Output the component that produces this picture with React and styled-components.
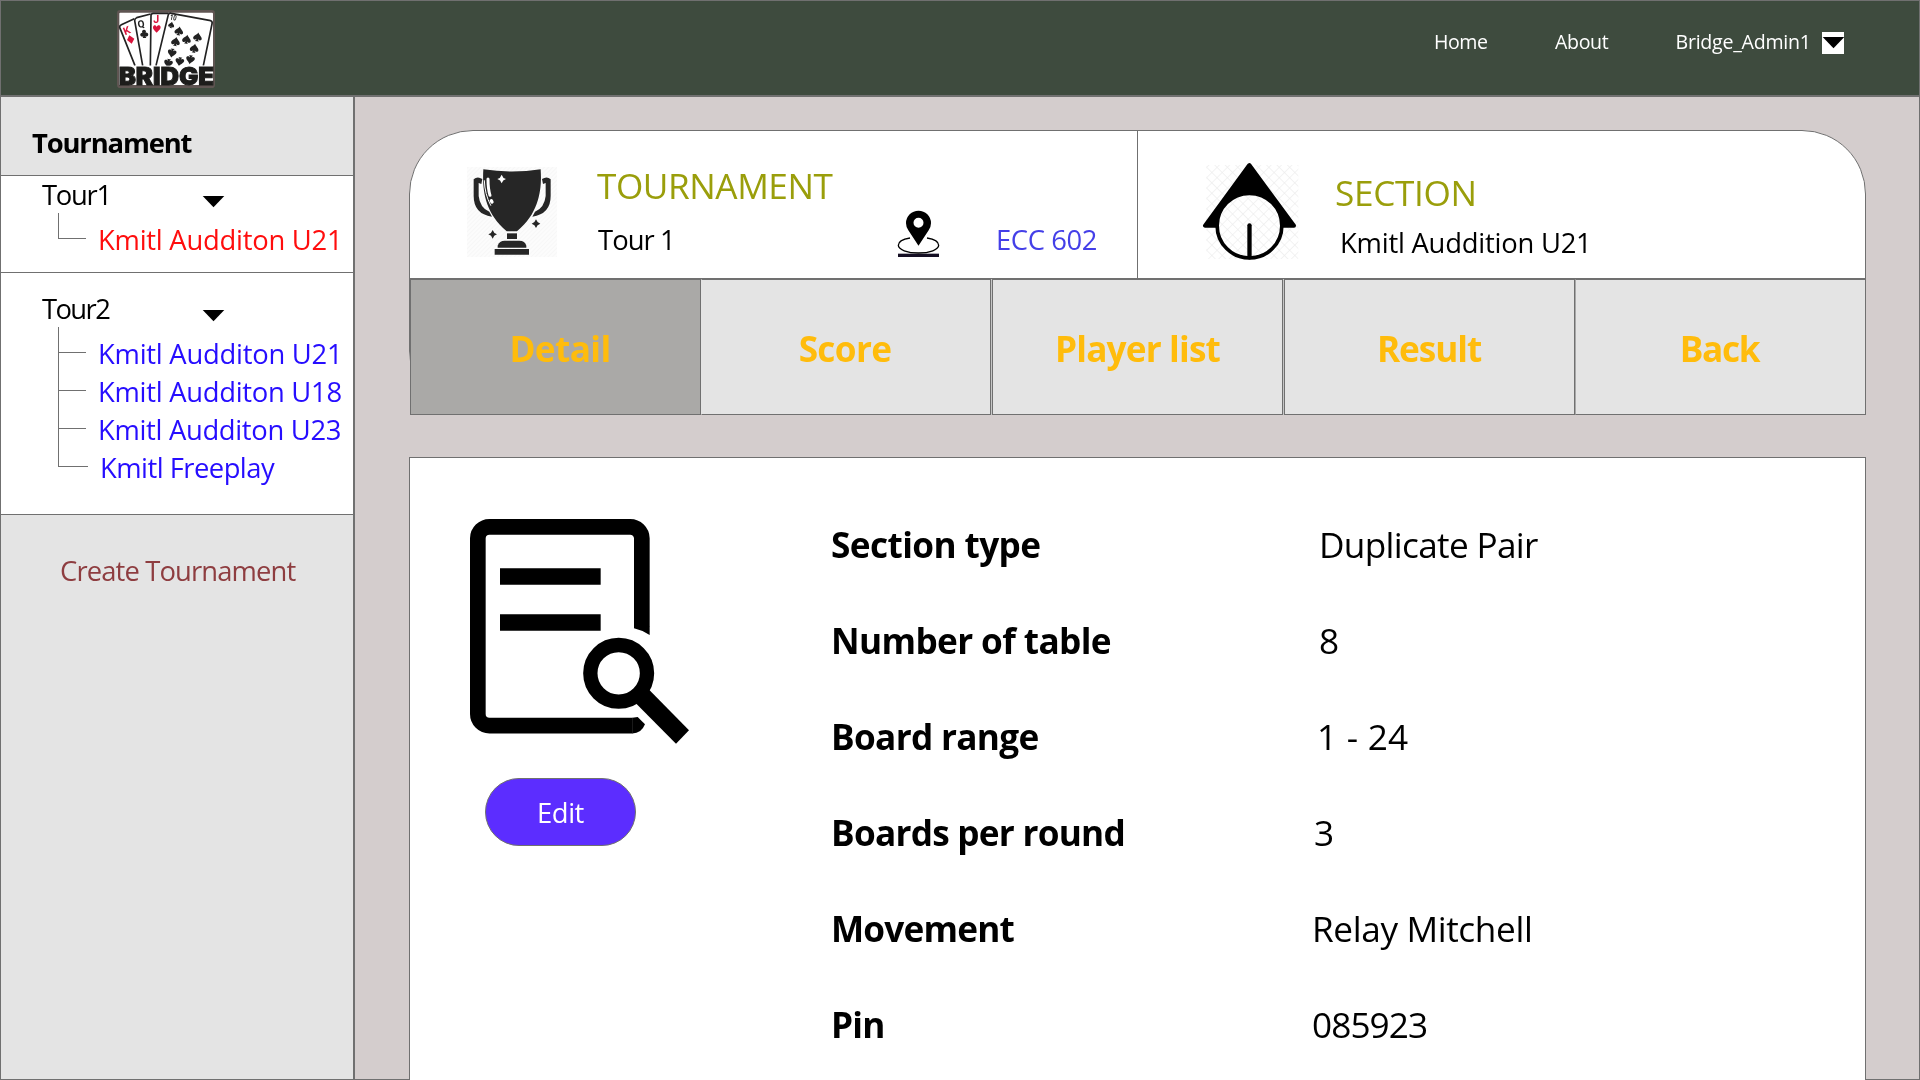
import React from 'react';
import styled, { createGlobalStyle } from 'styled-components';

const LINE = '#707070';

const GlobalStyle = createGlobalStyle`
  * { box-sizing: border-box; }
  body { margin: 0; background: #d4cdcd; font-family: "Open Sans", "Noto Sans", sans-serif; overflow: hidden; }
  svg { display: block; flex: none; overflow: visible; }
`;

const Page = styled.div`
  width: 1920px;
  height: 1080px;
  display: flex;
  flex-direction: column;
  color: #000;
`;

const SIZES = {
  small: ['19.6px', '27px'],
  medium: ['27.4px', '37px'],
  large: ['35.2px', '48px'],
};

const Text = styled.span`
  display: block;
  white-space: pre;
  font-size: ${(p) => SIZES[p.$size || 'medium'][0]};
  line-height: ${(p) => SIZES[p.$size || 'medium'][1]};
  font-weight: ${(p) => (p.$bold ? 700 : 400)};
  letter-spacing: ${(p) => p.$track || 0}px;
  color: ${(p) => p.$color || 'inherit'};
`;

/* Header */
const Header = styled.header`
  height: 96px;
  flex: none;
  display: flex;
  justify-content: space-between;
  background: #3e4b3e;
  border: 1px solid ${LINE};
  padding: 9px 75px 0 116px;
`;

const Nav = styled.nav`
  display: grid;
  grid-template-columns: 121px 120.5px 146.5px 22px;
  align-items: start;
  padding-top: 18px;
  color: #fff;
`;

const MenuButton = styled.button`
  display: flex;
  justify-content: center;
  align-items: flex-start;
  width: 22px;
  height: 22px;
  margin: 4px 0 0;
  padding: 5px 0 0;
  border: 0;
  background: #fff;
`;

/* Sidebar */
const Body = styled.div`
  flex: 1;
  display: flex;
  min-height: 0;
`;

const Sidebar = styled.aside`
  width: 354px;
  flex: none;
  background: #e4e4e4;
  border: 1px solid ${LINE};
`;

const SidebarHeading = styled.div`
  height: 79px;
  padding: 27px 0 0 31px;
  border-bottom: 1px solid ${LINE};
`;

const Group = styled.section`
  height: ${(p) => p.$height}px;
  padding: ${(p) => p.$top}px 0 0 41px;
  background: #fff;
  border-bottom: 1px solid ${LINE};
`;

const GroupTitle = styled.div`
  display: grid;
  grid-template-columns: 161px 21px;
  align-items: start;
  svg { margin-top: 20px; }
`;

const Tree = styled.ul`
  list-style: none;
  margin: 0;
  padding: 0 0 0 16px;
`;

const TreeItem = styled.li`
  display: flex;
  align-items: flex-end;
  gap: 12px;
  color: ${(p) => (p.$active ? '#ff0d0d' : '#260dff')};
  ${Text} { margin-bottom: -19px; }
`;

const Branch = styled.i`
  flex: none;
  width: ${(p) => (p.$wide ? 30 : 28)}px;
  height: ${(p) => (p.$first ? 26 : 38)}px;
  border: solid ${LINE};
  border-width: 0 0 1px 1px;
`;

const CreateLink = styled.a`
  display: block;
  padding: 37px 0 0 59px;
  color: #8e3d40;
`;

/* Main */
const Main = styled.main`
  flex: 1;
  display: flex;
  flex-direction: column;
  gap: 42px;
  padding: 33px 53px 0 54px;
  background: #d4cdcd;
  border: 1px solid ${LINE};
`;

const Card = styled.section`
  height: 285px;
  flex: none;
  background: #fff;
  border: 1px solid ${LINE};
  border-radius: 64px;
`;

const Summary = styled.div`
  display: flex;
  height: 148px;
  border-bottom: 1px solid ${LINE};
`;

const TournamentPane = styled.div`
  width: 728px;
  display: flex;
  align-items: flex-start;
  padding-left: 57px;
  border-right: 1px solid ${LINE};
  & > svg:first-child { margin-top: 36px; }
`;

const TournamentText = styled.div`
  width: 301px;
  margin: 30px 0 0 40px;
  display: grid;
  row-gap: 12px;
  ${Text} + ${Text} { padding-left: 1px; }
`;

const Place = styled.div`
  display: flex;
  align-items: flex-start;
  gap: 57px;
  padding-top: 79px;
  ${Text} { margin-top: 11px; }
`;

const SectionPane = styled.div`
  display: flex;
  align-items: flex-start;
  gap: 38px;
  padding: 31px 0 0 65px;
`;

const SectionText = styled.div`
  display: grid;
  row-gap: 8px;
  padding-top: 6px;
  ${Text} + ${Text} { padding-left: 5px; }
`;

const Tabs = styled.div`
  height: 136px;
  margin-right: -1px;
  display: grid;
  grid-template-columns: 291px 291px 292px 291px 291px;
  background: #c6c6c6;
`;

const Tab = styled.button`
  display: flex;
  justify-content: center;
  align-items: flex-start;
  margin: 0 ${(p) => p.$gap || 0}px 0 0;
  padding: 44px ${(p) => p.$trail || 0}px 0 ${(p) => p.$lead || 0}px;
  font-family: inherit;
  color: #ffbc0c;
  background: ${(p) => (p.$active ? '#aaa9a7' : '#e4e4e4')};
  border: 1px solid ${LINE};
  border-left-color: ${(p) => p.$edge || LINE};
`;

const Panel = styled.section`
  flex: 1;
  display: flex;
  background: #fff;
  border: 1px solid ${LINE};
  border-bottom: 0;
  padding-left: 59px;
`;

const Actions = styled.div`
  width: 362px;
  padding-top: 60px;
`;

const EditButton = styled.button`
  display: flex;
  justify-content: center;
  align-items: flex-start;
  width: 151px;
  height: 68px;
  margin: 33px 0 0 16px;
  padding: 15px 0 0;
  font-family: inherit;
  color: #fff;
  background: #5c2dff;
  border: 1px solid ${LINE};
  border-radius: 34px;
`;

const Details = styled.dl`
  margin: 0;
  padding-top: 62px;
`;

const DetailRow = styled.div`
  display: grid;
  grid-template-columns: 481px auto;
  height: 96px;
`;

const Value = styled.dd`
  margin: 0;
  padding-left: ${(p) => p.$inset}px;
`;

const Term = styled.dt`
  margin: 0;
`;

/* Drawings */
const Caret = () => (
  <svg width="21" height="11" viewBox="0 0 21 11"><path d="M-.3 0H21.300L10.500 11.300Z" /></svg>
);

const Spade = ({ x, y, s = 1, r = 0 }) => (
  <path
    transform={`translate(${x} ${y}) rotate(${r}) scale(${s})`}
    d="M0-14C3-7 13-3 13 4C13 10 5 11 2 6Q3 11 6 13H-6Q-3 11-2 6C-5 11-13 10-13 4C-13-3-3-7 0-14Z"
  />
);

const Logo = () => (
  <svg width="98" height="78" viewBox="51 30 294 234">
    <rect x="51" y="30" width="294" height="234" rx="10" fill="#5f5552" />
    <rect x="58" y="38" width="281" height="217" rx="3" fill="#fff" />
    <g fill="none" stroke="#222" strokeWidth="5" strokeLinejoin="round">
      <path d="M105 197L59 82Q58 77 64 74L103 56" />
      <path d="M128 197L104 62Q104 55 110 53L152 42" />
      <path d="M151 197L153 46Q154 40 160 40H205" />
      <path d="M168 197L205 44Q207 38 214 40L332 62Q338 64 336 72L310 197" />
    </g>
    <g fontFamily="Roboto, sans-serif" fontWeight="700">
      <text x="70" y="104" fontSize="32" fill="#d9143c" transform="rotate(-22 78 92)">K</text>
      <text x="113" y="83" fontSize="30" fill="#222" transform="rotate(-10 122 72)">Q</text>
      <text x="160" y="69" fontSize="32" fill="#d9143c">J</text>
      <text x="210" y="60" fontSize="23" fill="#222" textLength="20" lengthAdjust="spacingAndGlyphs" transform="rotate(12 218 52)">10</text>
    </g>
    <g fill="#d9143c">
      <path d="M88 106L103 116L95 131L81 120Z" />
      <path d="M170 98C162 90 158 86 159 81C161 74 168 75 170 81C172 75 180 74 182 81C182 87 177 91 170 98Z" />
    </g>
    <g fill="#222">
      <path d="M131 89A6 6 0 0 1 137 98A6 6 0 1 1 136 109L139 114H128L130 109A6 6 0 1 1 127 98A6 6 0 0 1 131 89Z" />
      <Spade x={214} y={75} s={0.7} r={12} />
      <Spade x={237} y={93} r={10} />
      <Spade x={293} y={111} r={10} />
      <Spade x={260} y={118} r={10} />
      <Spade x={227} y={125} r={10} />
      <Spade x={283} y={145} r={10} />
      <Spade x={216} y={159} r={190} />
      <Spade x={271} y={179} r={190} />
      <Spade x={239} y={185} r={190} />
      <Spade x={205} y={190} r={190} />
    </g>
    <rect x="58" y="197" width="281" height="58" fill="#fff" />
    <text x="56" y="254" fontFamily="Inter, sans-serif" fontWeight="900" fontSize="73" fill="#1d1d1b" stroke="#1d1d1b" strokeWidth="3" textLength="286" lengthAdjust="spacingAndGlyphs">BRIDGE</text>
  </svg>
);

const Sparkle = ({ x, y, s, fill }) => (
  <path fill={fill} transform={`translate(${x} ${y}) scale(${s})`} d="M0-13Q3-3 13 0Q3 3 0 13Q-3 3-13 0Q-3-3 0-13Z" />
);

const HANDLE = 'M221 178Q232 167 247 177L244 192L236 189V228Q240 264 268 275L276 290Q221 282 221 228Z';

const Trophy = () => (
  <svg width="90" height="90" viewBox="201 141 270 270" fill="#262626">
    <defs>
      <pattern id="stripes" width="9" height="9" patternUnits="userSpaceOnUse" patternTransform="rotate(45)">
        <rect width="9" height="9" fill="#fcfcfc" />
        <rect width="3" height="9" fill="#f7f7f7" />
      </pattern>
    </defs>
    <rect x="201" y="141" width="270" height="270" fill="url(#stripes)" />
    <path d="M250 148Q336 161 422 148C425 195 424 275 351 334H320C250 275 247 200 250 148Z" />
    <path d={HANDLE} />
    <path d={HANDLE} transform="translate(673 0) scale(-1 1)" />
    <path d="M321 340H351V357H321Z" />
    <path d="M293 383V377Q298 362 314 362H358Q375 362 379 377V383Z" />
    <path d="M284 387H387V404H284Z" />
    <g fill="none" stroke="#fff" strokeLinecap="round">
      <path d="M264 177Q264 207 270 226" strokeWidth="9" />
      <path d="M274 242L276 246" strokeWidth="10" />
      <path d="M253 182Q254 222 272 256" strokeWidth="3" />
    </g>
    <Sparkle x={305} y={177} s={1} fill="#fff" />
    <Sparkle x={278} y={343} s={1} fill="#262626" />
    <Sparkle x={408} y={311} s={1} fill="#262626" />
  </svg>
);

const Pin = () => (
  <svg width="41" height="47" viewBox="114 270 123 141">
    <rect x="114" y="401" width="123" height="10" fill="#150f24" />
    <path d="M150 354C125 358 115 367 115 376C115 389 142 399 175.5 399S236 389 236 376C236 367 226 358 201 354" fill="none" stroke="#000" strokeWidth="4" />
    <path fillRule="evenodd" d="M175.500 377L145 331Q138 320 138 309.500A37.500 37.500 0 0 1 213 309.500Q213 320 206 331ZM175.500 293A15 15 0 1 0 175.500 323A15 15 0 1 0 175.500 293Z" />
  </svg>
);

const Lattice = styled.rect`
  mix-blend-mode: multiply;
`;

const SectionMark = () => (
  <svg width="94" height="99" viewBox="129 126 282 297">
    <defs>
      <pattern id="lattice" width="22" height="22" patternUnits="userSpaceOnUse" patternTransform="rotate(45)">
        <path d="M0 0H22M0 0V22" stroke="#ededed" strokeWidth="4" fill="none" />
      </pattern>
    </defs>
    <path d="M268 135L135 317H402Z" stroke="#000" strokeWidth="12" strokeLinejoin="round" />
    <circle cx="268.500" cy="317" r="97" fill="#fff" stroke="#000" strokeWidth="11" />
    <path d="M268.500 316V412" stroke="#000" strokeWidth="13" strokeLinecap="round" />
    <Lattice x="139" y="135" width="276" height="282" fill="url(#lattice)" />
  </svg>
);

const SearchDocument = () => (
  <svg width="221" height="227" viewBox="207 234 663 681">
    <path d="M725.500 561V295A35 35 0 0 0 690 260.500H268.500A35 35 0 0 0 233.500 295V822A35 35 0 0 0 268.500 857H698" fill="none" stroke="#000" strokeWidth="47" />
    <path d="M702 560V565Q728 571 749 585V560Z" />
    <path d="M697 833.500L713 831L735 853Q724 880.500 697 880.500Z" />
    <path d="M300 385H602V434H300ZM300 523H602V572H300Z" />
    <circle cx="656" cy="700" r="85" fill="none" stroke="#000" strokeWidth="43" />
    <path d="M700 782L740 742L867 871L828 911Z" />
  </svg>
);

const GROUPS = [
  {
    name: 'Tour1', track: -1.26, height: 97, top: 0,
    items: [{ label: 'Kmitl Audditon U21', track: -0.25, active: true }],
  },
  {
    name: 'Tour2', track: -1.6, height: 242, top: 17,
    items: [
      { label: 'Kmitl Audditon U21', track: -0.25 },
      { label: 'Kmitl Audditon U18', track: -0.28 },
      { label: 'Kmitl Audditon U23', track: -0.32 },
      { label: 'Kmitl Freeplay', track: -0.53, wide: true },
    ],
  },
];

const TABS = [
  { label: 'Detail', track: -0.6, active: true, lead: 9 },
  { label: 'Score', track: -0.68, edge: '#e4e4e4', gap: 1, trail: 2 },
  { label: 'Player list', track: -0.85, gap: 1 },
  { label: 'Result', track: -1.07, trail: 1 },
  { label: 'Back', track: -1.33, edge: '#a8a8a8', trail: 2 },
];

const DETAILS = [
  ['Section type', -0.6, 'Duplicate Pair', -0.68, 7],
  ['Number of table', -0.62, '8', 0, 7],
  ['Board range', -0.68, '1 - 24', 0.23, 5],
  ['Boards per round', -0.75, '3', 0, 2],
  ['Movement', -0.82, 'Relay Mitchell', -0.38, 0],
  ['Pin', -0.8, '085923', -0.92, 0],
];

export default function App() {
  return (
    <Page>
      <GlobalStyle />
      <Header>
        <Logo />
        <Nav>
          <Text $size="small" $track={-0.46}>Home</Text>
          <Text $size="small" $track={-0.35}>About</Text>
          <Text $size="small" $track={-0.25}>Bridge_Admin1</Text>
          <MenuButton aria-label="Account menu"><Caret /></MenuButton>
        </Nav>
      </Header>
      <Body>
        <Sidebar>
          <SidebarHeading><Text $bold $track={-1.15}>Tournament</Text></SidebarHeading>
          {GROUPS.map((g) => (
            <Group key={g.name} $height={g.height} $top={g.top}>
              <GroupTitle><Text $track={g.track}>{g.name}</Text><Caret /></GroupTitle>
              <Tree>
                {g.items.map((item, i) => (
                  <TreeItem key={item.label} $active={item.active}>
                    <Branch $first={i === 0} $wide={item.wide} />
                    <Text $track={item.track}>{item.label}</Text>
                  </TreeItem>
                ))}
              </Tree>
            </Group>
          ))}
          <CreateLink><Text $track={-0.87}>Create Tournament</Text></CreateLink>
        </Sidebar>
        <Main>
          <Card>
            <Summary>
              <TournamentPane>
                <Trophy />
                <TournamentText>
                  <Text $size="large" $track={-0.45} $color="#9a9e0b">TOURNAMENT</Text>
                  <Text $track={-0.93}>Tour 1</Text>
                </TournamentText>
                <Place>
                  <Pin />
                  <Text $track={-0.42} $color="#443fe8">ECC 602</Text>
                </Place>
              </TournamentPane>
              <SectionPane>
                <SectionMark />
                <SectionText>
                  <Text $size="large" $track={-0.35} $color="#9a9e0b">SECTION</Text>
                  <Text $track={-0.22}>Kmitl Auddition U21</Text>
                </SectionText>
              </SectionPane>
            </Summary>
            <Tabs>
              {TABS.map((t) => (
                <Tab key={t.label} $active={t.active} $lead={t.lead} $trail={t.trail} $gap={t.gap} $edge={t.edge}>
                  <Text $size="large" $bold $track={t.track}>{t.label}</Text>
                </Tab>
              ))}
            </Tabs>
          </Card>
          <Panel>
            <Actions>
              <SearchDocument />
              <EditButton><Text $track={-0.46}>Edit</Text></EditButton>
            </Actions>
            <Details>
              {DETAILS.map(([term, termTrack, value, valueTrack, inset]) => (
                <DetailRow key={term}>
                  <Term><Text $size="large" $bold $track={termTrack}>{term}</Text></Term>
                  <Value $inset={inset}><Text $size="large" $track={valueTrack}>{value}</Text></Value>
                </DetailRow>
              ))}
            </Details>
          </Panel>
        </Main>
      </Body>
    </Page>
  );
}
